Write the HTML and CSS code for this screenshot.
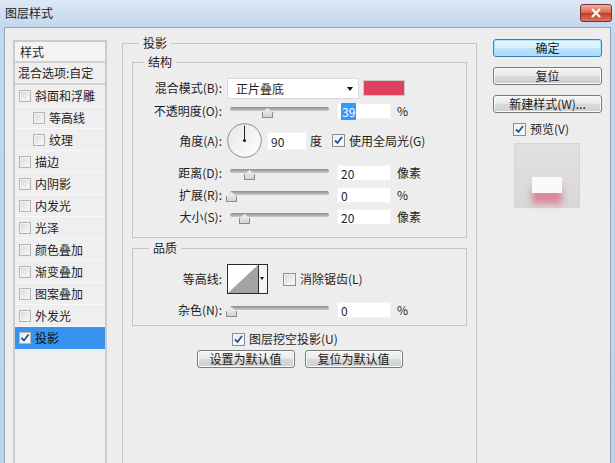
FILE: index.html
```html
<!DOCTYPE html>
<html>
<head>
    <link rel="stylesheet" href="styles.css">
</head>
<body>
  <div class="window">
    <div class="titlebar">
      <span class="title">图层样式</span>
      <span class="close">
        <svg width="12" height="10" viewBox="0 0 12 10"><path d="M2 1 L10 9 M10 1 L2 9" stroke="#fff" stroke-width="2.2"/></svg>
      </span>
    </div>

    <div class="client">
      <!-- style list -->
      <div class="styles">
        <div class="styles-head">样式</div>
        <div class="styles-blend">混合选项:自定</div>
        <div class="item"><span class="cb small"></span>斜面和浮雕</div>
        <div class="item sub"><span class="cb small"></span>等高线</div>
        <div class="item sub"><span class="cb small"></span>纹理</div>
        <div class="item"><span class="cb small"></span>描边</div>
        <div class="item"><span class="cb small"></span>内阴影</div>
        <div class="item"><span class="cb small"></span>内发光</div>
        <div class="item"><span class="cb small"></span>光泽</div>
        <div class="item"><span class="cb small"></span>颜色叠加</div>
        <div class="item"><span class="cb small"></span>渐变叠加</div>
        <div class="item"><span class="cb small"></span>图案叠加</div>
        <div class="item"><span class="cb small"></span>外发光</div>
        <div class="item active"><span class="cb small on"><svg width="10" height="10" viewBox="0 0 10 10"><path d="M1.5 5 L4 7.5 L8.5 1.5" fill="none" stroke="#2c4f8c" stroke-width="1.8"/></svg></span>投影</div>
      </div>

      <!-- drop shadow settings -->
      <fieldset class="group">
        <legend>投影</legend>

        <fieldset class="sub-group structure">
          <legend>结构</legend>

          <div class="row r-blend">
            <span class="lbl">混合模式(B):</span>
            <div class="select">正片叠底<span class="arrow"></span></div>
            <span class="swatch"></span>
          </div>

          <div class="row r-slider">
            <span class="lbl">不透明度(O):</span>
            <div class="slider"><span class="track"></span><span class="thumb" style="left: 35px"></span></div>
            <span class="num"><span class="sel">39</span></span>
            <span class="unit">%</span>
          </div>

          <div class="row r-angle">
            <span class="lbl">角度(A):</span>
            <svg class="dial" width="35" height="35" viewBox="0 0 35 35">
              <defs>
                <linearGradient id="dg" x1="0" y1="0" x2="1" y2="1">
                  <stop offset="0" stop-color="#e6e6e6"/>
                  <stop offset="1" stop-color="#ffffff"/>
                </linearGradient>
              </defs>
              <circle cx="17.5" cy="17.5" r="16.8" fill="url(#dg)" stroke="#8c8c8c"/>
              <path d="M17.5 17.5 V2.5" stroke="#222" stroke-width="1"/>
              <circle cx="17.5" cy="17.5" r="1.6" fill="#222"/>
            </svg>
            <span class="num short">90</span>
            <span class="unit deg">度</span>
            <span class="check global"><span class="cb on"><svg width="11" height="11" viewBox="0 0 11 11"><path d="M2 5.5 L4.5 8 L9 2" fill="none" stroke="#2c4f8c" stroke-width="1.8"/></svg></span>使用全局光(G)</span>
          </div>

          <div class="row r-slider first">
            <span class="lbl">距离(D):</span>
            <div class="slider"><span class="track"></span><span class="thumb" style="left: 17px"></span></div>
            <span class="num">20</span>
            <span class="unit">像素</span>
          </div>

          <div class="row r-slider">
            <span class="lbl">扩展(R):</span>
            <div class="slider"><span class="track"></span><span class="thumb" style="left: -1px"></span></div>
            <span class="num">0</span>
            <span class="unit">%</span>
          </div>

          <div class="row r-slider">
            <span class="lbl">大小(S):</span>
            <div class="slider"><span class="track"></span><span class="thumb" style="left: 12px"></span></div>
            <span class="num">20</span>
            <span class="unit">像素</span>
          </div>
        </fieldset>

        <fieldset class="sub-group quality">
          <legend>品质</legend>

          <div class="row r-contour">
            <span class="lbl">等高线:</span>
            <div class="contour">
              <svg width="30" height="28" viewBox="0 0 30 28"><polygon points="0,28 30,0 30,28" fill="#a3a3a3"/></svg>
              <span class="contour-drop"><span class="arrow"></span></span>
            </div>
            <span class="check aa"><span class="cb"></span>消除锯齿(L)</span>
          </div>

          <div class="row r-slider noise">
            <span class="lbl">杂色(N):</span>
            <div class="slider"><span class="track"></span><span class="thumb" style="left: -1px"></span></div>
            <span class="num">0</span>
            <span class="unit">%</span>
          </div>
        </fieldset>

        <div class="knockout"><span class="cb on"><svg width="11" height="11" viewBox="0 0 11 11"><path d="M2 5.5 L4.5 8 L9 2" fill="none" stroke="#2c4f8c" stroke-width="1.8"/></svg></span>图层挖空投影(U)</div>

        <div class="defaults">
          <button class="btn">设置为默认值</button>
          <button class="btn">复位为默认值</button>
        </div>
      </fieldset>

      <!-- dialog actions -->
      <div class="actions">
        <button class="btn wide primary">确定</button>
        <button class="btn wide">复位</button>
        <button class="btn wide">新建样式(W)...</button>
        <div class="preview-toggle"><span class="cb on"><svg width="11" height="11" viewBox="0 0 11 11"><path d="M2 5.5 L4.5 8 L9 2" fill="none" stroke="#2c4f8c" stroke-width="1.8"/></svg></span>预览(V)</div>
        <div class="preview"><span class="preview-shape"></span></div>
      </div>
    </div>
  </div>
</body>
</html>
```

FILE: styles.css
```css
* {
    box-sizing: border-box;
}

body {
    margin: 0;
    width: 615px;
    height: 463px;
    overflow: hidden;
    font: 12px/16px "Noto Sans CJK SC", "Liberation Sans", sans-serif;
    color: #1e1e1e;
}

.window {
    height: 463px;
    display: flex;
    flex-direction: column;
    background: linear-gradient(#dce8f5, #c3d7ed 27px, #bed3ea);
}

.titlebar {
    height: 27px;
    flex: 0 0 27px;
    display: flex;
    align-items: center;
    justify-content: space-between;
    padding: 0 3px 1px 5px;
}

.title {
    color: #1a1a1a;
}

.close {
    width: 32px;
    height: 18px;
    border: 1px solid #7a3026;
    border-radius: 3px;
    background: linear-gradient(#eeb2a6, #d8644f 48%, #c53e28 52%, #d8735f);
    display: flex;
    align-items: center;
    justify-content: center;
}

.client {
    flex: 1;
    min-height: 0;
    margin: 0 4px;
    border: 1px solid #91a6c0;
    border-bottom: none;
    background: #ededed;
    display: flex;
    align-items: flex-start;
    padding: 7px 8px 0 8px;
    overflow: hidden;
}

/* ---- style list ---- */
.styles {
    width: 94px;
    margin-top: 5px;
    align-self: stretch;
    border: 2px solid #cbcbcb;
    border-bottom: none;
    background: #efefef;
}

.styles-head {
    height: 21px;
    line-height: 19px;
    padding-left: 5px;
    border-bottom: 2px solid #d2d2d2;
    background: #f3f3f3;
}

.styles-blend {
    height: 22px;
    line-height: 20px;
    padding-left: 3px;
    border-bottom: 2px solid #d2d2d2;
    white-space: nowrap;
}

.item {
    height: 22px;
    display: flex;
    align-items: center;
    gap: 4px;
    padding-left: 4px;
    border-bottom: 1px solid #f9f9f9;
}

.item.sub {
    padding-left: 18px;
}

.item.active {
    background: #3893ee;
    color: #111;
    border-bottom-color: #3893ee;
}

/* ---- checkbox ---- */
.cb {
    width: 13px;
    height: 13px;
    flex: 0 0 13px;
    border: 1px solid #8f8f8f;
    background: linear-gradient(135deg, #d8d8d8, #fafafa);
    box-shadow: inset 0 0 0 1px #f2f2f2;
    display: inline-flex;
    align-items: center;
    justify-content: center;
}

.cb.small {
    width: 12px;
    height: 12px;
    flex-basis: 12px;
    border-color: #b4b4b4;
}

.cb.on {
    background: linear-gradient(135deg, #e6eef8, #ffffff);
}

.check {
    display: flex;
    align-items: center;
    gap: 4px;
}

/* ---- group boxes ---- */
.group {
    width: 355px;
    margin: 0 0 0 15px;
    padding: 0;
    min-width: 0;
    align-self: stretch;
    border: 1px solid #c4c4c4;
    border-bottom: none;
}

.group legend {
    margin-left: 16px;
    padding: 0 4px;
    line-height: 16px;
}

.sub-group {
    margin: 3px 9px 0 9px;
    padding: 0 0 10px 0;
    min-width: 0;
    border: 1px solid #c4c4c4;
}

.sub-group legend {
    margin-left: 11px;
}

.quality {
    margin-top: 2px;
    padding-bottom: 5px;
}

.quality legend {
    margin-left: 16px;
}

.row {
    display: flex;
    align-items: center;
}

.lbl {
    width: 89px;
    flex: 0 0 89px;
    text-align: right;
    margin-right: 5px;
    white-space: nowrap;
}

.r-blend {
    height: 22px;
    margin-top: 7px;
}

.r-slider {
    height: 20px;
    margin-top: 2px;
}

.r-slider.first {
    margin-top: 5px;
}

.r-angle {
    height: 35px;
    margin-top: 2px;
}

.select {
    position: relative;
    width: 132px;
    height: 21px;
    line-height: 19px;
    padding-left: 8px;
    background: #fff;
    border: 1px solid #dadada;
}

.arrow {
    position: absolute;
    width: 0;
    height: 0;
    border-left: 3.5px solid transparent;
    border-right: 3.5px solid transparent;
    border-top: 4px solid #111;
}

.select .arrow {
    right: 5px;
    top: 8px;
}

.swatch {
    width: 42px;
    height: 16px;
    margin-left: 4px;
    background: #e0405f;
    border: 1px solid #c8c8c8;
}

.slider {
    position: relative;
    width: 103px;
    height: 20px;
}

.track {
    position: absolute;
    left: 3px;
    right: 1px;
    top: 6px;
    height: 4px;
    border-radius: 2px;
    background: linear-gradient(#8e8e8e, #c9c9c9);
}

.thumb {
    position: absolute;
    top: 7px;
    width: 11px;
    height: 10px;
    background: linear-gradient(#f0f0f0, #d4d4d4);
    border: 1px solid #8a8a8a;
    border-top: none;
    clip-path: polygon(50% 0, 100% 45%, 100% 100%, 0 100%, 0 45%);
}

.num {
    width: 54px;
    height: 16px;
    margin-left: 7px;
    padding-left: 3px;
    line-height: 16px;
    background: #fff;
    border: 1px solid #f2f2f2;
}

.num.short {
    width: 40px;
    height: 18px;
    line-height: 18px;
    margin-left: 5px;
}

.sel {
    background: #3399ff;
    color: #fff;
    padding: 0 1px;
}

.unit {
    margin-left: 6px;
}

.unit.deg {
    margin-left: 3px;
}

.global {
    margin-left: 10px;
}

.r-contour {
    height: 30px;
    margin-top: 8px;
}

.contour {
    display: flex;
    width: 41px;
    height: 30px;
    border: 1px solid #2c2c2c;
    background: #fff;
}

.contour svg {
    display: block;
}

.contour-drop {
    position: relative;
    flex: 1;
    border-left: 1px solid #2c2c2c;
    background: #f4f4f4;
}

.contour-drop .arrow {
    left: 1px;
    top: 12px;
    border-left-width: 2.5px;
    border-right-width: 2.5px;
    border-top-width: 3px;
}

.aa {
    margin-left: 15px;
}

.noise {
    margin-top: 6px;
}

.knockout {
    display: flex;
    align-items: center;
    gap: 4px;
    height: 14px;
    margin-top: 6px;
    padding-left: 109px;
}

.defaults {
    display: flex;
    justify-content: center;
    gap: 10px;
    margin-top: 4px;
}

.defaults .btn {
    width: 98px;
}

/* ---- buttons ---- */
.btn {
    height: 18px;
    padding: 0;
    font: inherit;
    line-height: 14px;
    color: #1a1a1a;
    border: 1px solid #7b7b7b;
    border-radius: 3px;
    background: linear-gradient(#f6f6f6, #e8e8e8 50%, #d9d9d9 51%, #cfcfcf);
    box-shadow: inset 0 0 0 1px #fbfbfb;
}

.actions {
    width: 109px;
    margin: 4px 0 0 16px;
    display: flex;
    flex-direction: column;
}

.btn.wide {
    width: 109px;
    margin-bottom: 10px;
}

.btn.primary {
    border-color: #3c7fb1;
    background: linear-gradient(#eaf6fd, #d9f0fc 50%, #bee6fd 51%, #a7d9f5);
    box-shadow: inset 0 0 0 1px #a8e4fa;
}

.preview-toggle {
    display: flex;
    align-items: center;
    gap: 4px;
    height: 14px;
    margin-top: -1px;
    padding-left: 20px;
}

.preview {
    position: relative;
    width: 66px;
    height: 65px;
    margin: 7px 0 0 21px;
    background: linear-gradient(#e2e0e1, #d9d7d8);
    border: 1px solid #d4d4d4;
}

.preview-shape {
    position: absolute;
    left: 17px;
    top: 33px;
    width: 30px;
    height: 16px;
    background: #fafafa;
    box-shadow: 0 11px 6px rgba(222, 70, 105, 0.55);
}
```
